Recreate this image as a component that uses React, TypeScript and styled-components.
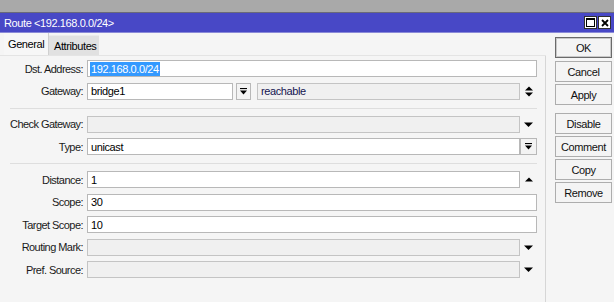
import React from "react";
import styled, { createGlobalStyle, css } from "styled-components";

const GlobalStyle = createGlobalStyle`
  html, body {
    margin: 0;
    padding: 0;
    background: #f5f5f5;
  }
  body {
    font-family: "Liberation Sans", Arial, sans-serif;
    font-size: 11px;
    letter-spacing: -0.4px;
    color: #000;
  }
`;

type Arrow = "down" | "up" | "updown" | "bar";

const ArrowIcon = ({ kind }: { kind: Arrow }) => {
  if (kind === "updown")
    return (
      <svg width="8" height="11" viewBox="0 0 8 11">
        <path d="M0 4.5 L4 0.5 L8 4.5 Z M0 6.5 L8 6.5 L4 10.5 Z" fill="#000" />
      </svg>
    );
  if (kind === "up")
    return (
      <svg width="8" height="5" viewBox="0 0 8 5">
        <path d="M0 4.5 L4 0.5 L8 4.5 Z" fill="#000" />
      </svg>
    );
  if (kind === "bar")
    return (
      <svg width="7" height="7" viewBox="0 0 7 7">
        <path d="M0 0.5 H7" stroke="#000" strokeWidth="1.2" />
        <path d="M0 2.5 L7 2.5 L3.5 6.5 Z" fill="#000" />
      </svg>
    );
  return (
    <svg width="9" height="5" viewBox="0 0 9 5">
      <path d="M0 0.5 L9 0.5 L4.5 5 Z" fill="#000" />
    </svg>
  );
};

type Field = {
  label: string;
  value?: string;
  selected?: boolean;
  disabled?: boolean;
  trail?: Arrow;
  button?: boolean;
};

const groups: Field[][] = [
  [
    { label: "Dst. Address", value: "192.168.0.0/24", selected: true },
  ],
  [
    { label: "Check Gateway", disabled: true, trail: "down" },
    { label: "Type", value: "unicast", button: true },
  ],
  [
    { label: "Distance", value: "1", trail: "up" },
    { label: "Scope", value: "30" },
    { label: "Target Scope", value: "10" },
    { label: "Routing Mark", disabled: true, trail: "down" },
    { label: "Pref. Source", disabled: true, trail: "down" },
  ],
];

const buttons = [
  ["OK", "Cancel", "Apply"],
  ["Disable", "Comment", "Copy", "Remove"],
];

const FieldRow = ({ f }: { f: Field }) => (
  <Row>
    <Label>{f.label}:</Label>
    <Input disabled={f.disabled}>
      {f.value && <Value selected={f.selected}>{f.value}</Value>}
    </Input>
    {f.button && (
      <DropButton wide>
        <ArrowIcon kind="bar" />
      </DropButton>
    )}
    {f.trail && (
      <Trail>
        <ArrowIcon kind={f.trail} />
      </Trail>
    )}
  </Row>
);

const App = () => {
  return (
    <>
      <GlobalStyle />
      <Window>
        <TopStrip />
        <TitleBar>
          <Title>Route &lt;192.168.0.0/24&gt;</Title>
          <TitleButtons>
            <TitleButton>
              <svg width="9" height="9" viewBox="0 0 9 9">
                <rect x="0.5" y="0.5" width="8" height="8" fill="none" stroke="#000" />
                <path d="M0 1.5 H9" stroke="#000" />
              </svg>
            </TitleButton>
            <TitleButton>
              <svg width="8" height="8" viewBox="0 0 8 8">
                <path d="M1 1 L7 7 M7 1 L1 7" stroke="#000" strokeWidth="1.8" />
              </svg>
            </TitleButton>
          </TitleButtons>
        </TitleBar>
        <Body>
          <Main>
            <Tabs>
              <Tab active>General</Tab>
              <Tab>Attributes</Tab>
            </Tabs>
            <Form>
              <Group>
                <FieldRow f={groups[0][0]} />
                <Row>
                  <Label>Gateway:</Label>
                  <Input width={146}>
                    <Value>bridge1</Value>
                  </Input>
                  <DropButton>
                    <ArrowIcon kind="bar" />
                  </DropButton>
                  <Input disabled>
                    <Value reach>reachable</Value>
                  </Input>
                  <Trail>
                    <ArrowIcon kind="updown" />
                  </Trail>
                </Row>
              </Group>
              <Separator />
              <Group>
                {groups[1].map((f) => (
                  <FieldRow key={f.label} f={f} />
                ))}
              </Group>
              <Separator />
              <Group>
                {groups[2].map((f) => (
                  <FieldRow key={f.label} f={f} />
                ))}
              </Group>
            </Form>
          </Main>
          <Side>
            {buttons.map((set, i) => (
              <ButtonSet key={i}>
                {set.map((b) => (
                  <Button key={b} primary={b === "OK"}>
                    {b}
                  </Button>
                ))}
              </ButtonSet>
            ))}
          </Side>
        </Body>
      </Window>
    </>
  );
};

export default App;

const Window = styled.div`
  width: 614px;
  height: 302px;
  display: flex;
  flex-direction: column;
  background: #f5f5f5;
  overflow: hidden;
`;

const TopStrip = styled.div`
  height: 12px;
  background: #a9a9a9;
  border-bottom: 1px solid #6a6a7a;
`;

const TitleBar = styled.div`
  height: 19px;
  background: #4848c6;
  border-bottom: 1px solid #8a8ad8;
  display: flex;
  align-items: center;
  justify-content: space-between;
  padding: 0 3px 0 4px;
`;

const Title = styled.div`
  color: #fff;
  font-size: 11px;
`;

const TitleButtons = styled.div`
  display: flex;
  gap: 1px;
`;

const TitleButton = styled.div`
  width: 13px;
  height: 13px;
  background: #fff;
  border: 1px solid #303030;
  box-sizing: border-box;
  display: flex;
  align-items: center;
  justify-content: center;
`;

const Body = styled.div`
  flex: 1;
  display: flex;
`;

const Main = styled.div`
  width: 546px;
  display: flex;
  flex-direction: column;
`;

const Tabs = styled.div`
  display: flex;
  align-items: flex-end;
  height: 22px;
  padding: 0 0 0 4px;
  border-bottom: 1px solid #e4e4e4;
`;

const Tab = styled.div<{ active?: boolean }>`
  height: 20px;
  display: flex;
  align-items: center;
  padding: 0 5px;
  box-sizing: border-box;
  ${(p) =>
    p.active
      ? css`
          height: 22px;
          width: 45px;
          padding-left: 4px;
          border-right: 1px solid #d0d0d0;
          background: #f7f7f7;
        `
      : css`
          width: 50px;
          background: #e1e1e1;
          border-top: 1px solid #ececec;
        `}
`;

const Form = styled.div`
  flex: 1;
  border-right: 1px solid #d6d6d6;
  padding: 4px 8px 0 0;
`;

const Group = styled.div`
  display: flex;
  flex-direction: column;
  gap: 5.5px;
`;

const Separator = styled.div`
  height: 1px;
  background: #dedede;
  margin: 8px 0 7px 10px;
`;

const Row = styled.div`
  display: flex;
  align-items: center;
  height: 17px;
`;

const Label = styled.div`
  width: 83px;
  margin-right: 4px;
  text-align: right;
  color: #1a1a1a;
  white-space: nowrap;
  letter-spacing: -0.55px;
`;

const Input = styled.div<{ disabled?: boolean; width?: number }>`
  height: 17px;
  box-sizing: border-box;
  border: 1px solid ${(p) => (p.disabled ? "#c4c4c4" : "#b8b8b8")};
  background: ${(p) => (p.disabled ? "#f0f0f0" : "#fff")};
  display: flex;
  align-items: center;
  padding-left: 2px;
  ${(p) =>
    p.width
      ? css`
          width: ${p.width}px;
          flex: none;
        `
      : css`
          flex: 1;
        `}
`;

const Value = styled.span<{ selected?: boolean; reach?: boolean }>`
  padding: 0 1px;
  line-height: 14px;
  color: ${(p) => (p.reach ? "#141450" : "#000")};
  ${(p) =>
    p.selected &&
    css`
      background: #3399ff;
      color: #fff;
    `}
`;

const DropButton = styled.div<{ wide?: boolean }>`
  width: ${(p) => (p.wide ? 17 : 15)}px;
  height: 17px;
  box-sizing: border-box;
  border: 1px solid #b8b8b8;
  background: #f3f3f3;
  display: flex;
  align-items: center;
  justify-content: center;
  margin: ${(p) => (p.wide ? "0" : "0 6px 0 3px")};
`;

const Trail = styled.div`
  width: 17px;
  display: flex;
  align-items: center;
  justify-content: center;
`;

const Side = styled.div`
  flex: 1;
  padding: 4px 2px 0 9px;
  display: flex;
  flex-direction: column;
  gap: 8px;
`;

const ButtonSet = styled.div`
  display: flex;
  flex-direction: column;
  gap: 2px;
`;

const Button = styled.div<{ primary?: boolean }>`
  height: 21px;
  box-sizing: border-box;
  border: 1px solid ${(p) => (p.primary ? "#6a6a6a" : "#adadad")};
  ${(p) =>
    p.primary &&
    css`
      box-shadow: inset 0 0 0 1px #c8c8c8;
      margin-bottom: 1px;
    `}
  background: #f4f4f4;
  display: flex;
  align-items: center;
  justify-content: center;
  color: #111;
`;
